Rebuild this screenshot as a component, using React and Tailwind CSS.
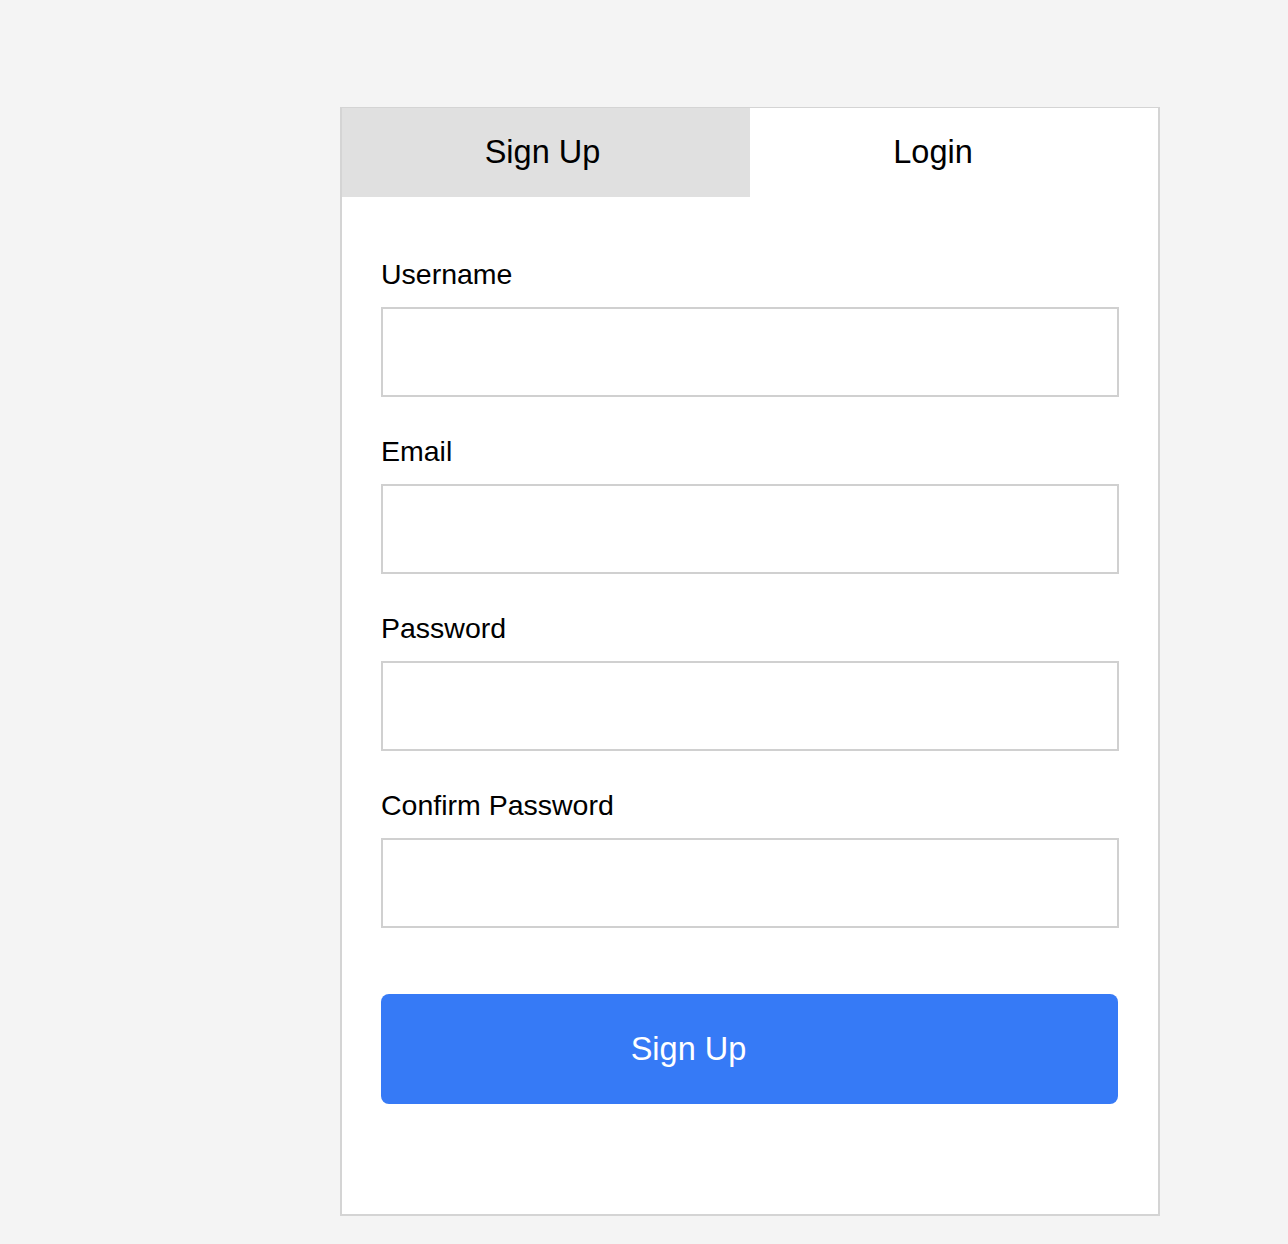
import { useState } from 'react';

const fields = [
  { name: 'username', label: 'Username', type: 'text' },
  { name: 'email', label: 'Email', type: 'email' },
  { name: 'password', label: 'Password', type: 'password' },
  { name: 'confirm', label: 'Confirm Password', type: 'password' },
];

const App = () => {
  const [tab, setTab] = useState('signup');

  return (
    <div className="min-h-[1244px] bg-[#f4f4f4] pt-[107px] pl-[340px] font-['Liberation_Sans',Arial,sans-serif] text-black">
      <div className="w-[820px] border-t border-x-2 border-b-2 border-[#d4d4d4] bg-white">
        {/* Tabs */}
        <div className="grid grid-cols-2 h-[89px]">
          <button
            onClick={() => setTab('signup')}
            className={`flex items-center justify-center pr-[7px] text-[32.5px] ${
              tab === 'signup' ? 'bg-[#e0e0e0]' : 'bg-white'
            }`}
          >
            Sign Up
          </button>
          <button
            onClick={() => setTab('login')}
            className={`flex items-center justify-center pr-[42px] text-[32.5px] ${
              tab === 'login' ? 'bg-[#e0e0e0]' : 'bg-white'
            }`}
          >
            Login
          </button>
        </div>

        {/* Form */}
        <form className="px-[39px] pt-[61px] pb-[110px]" onSubmit={(e) => e.preventDefault()}>
          {fields.map((f) => (
            <div key={f.name} className="mb-[38px]">
              <label htmlFor={f.name} className="block h-[32px] leading-[32px] text-[28.5px] mb-[17px]">
                {f.label}
              </label>
              <input
                id={f.name}
                type={f.type}
                className="block w-full h-[90px] border-2 border-[#d0d0d0] bg-white px-3 text-[24px] outline-none"
              />
            </div>
          ))}
          <button
            type="submit"
            className="mt-[66px] flex h-[110px] w-[737px] items-center justify-center rounded-[8px] bg-[#367af6] pr-[122px] text-[32.5px] text-white"
          >
            Sign Up
          </button>
        </form>
      </div>
    </div>
  );
};

export default App;
